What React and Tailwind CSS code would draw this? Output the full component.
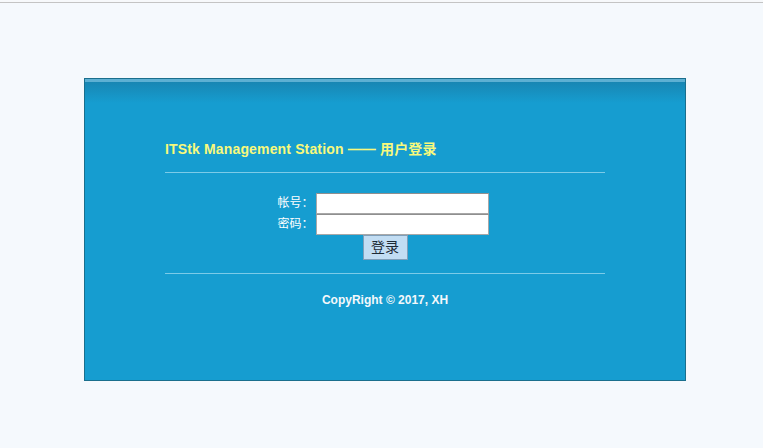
import React from 'react';

const cjk = "font-['Liberation_Sans','Noto_Sans_CJK_SC',sans-serif]";

const LoginRow = ({ label, type }) => (
  <div className="flex items-center">
    <span className="w-[36px] whitespace-nowrap text-right text-[12px] leading-[21px] text-white">{label}</span>
    <input
      type={type}
      className="ml-[2px] h-[21px] w-[173px] border border-[#a8a8a8] border-t-[#8f8f8f] bg-white px-1 text-[12px] outline-none"
    />
  </div>
);

const App = () => {
  return (
    <div className={`min-h-[448px] bg-[#f5f9fd] ${cjk}`}>
      <div className="h-[2px] bg-[#f7f9fb]"></div>
      <div className="h-px bg-[#c4c4c4]"></div>

      <div className="ml-[84px] mt-[75px] h-[303px] w-[602px] border border-[#1a6f8d] bg-[linear-gradient(to_bottom,#5db0d3_0px,#5db0d3_3px,#1886b3_3px,#169dd0_24px,#169dd0_100%)]">
        <div className="mx-auto w-[440px] pt-[62px]">
          <h1 className="text-[14px] font-bold leading-[17px] tracking-[0.15px] text-[#f8f97c]">
            ITStk Management Station —— 用户登录
          </h1>
          <div className="mt-[14px] h-px bg-[#7ccbe8]"></div>

          {/* login form */}
          <div className="mt-[20px] flex flex-col items-center">
            <div className="mr-[4px] flex flex-col">
              <LoginRow label="帐号：" type="text" />
              <LoginRow label="密码：" type="password" />
            </div>
            <button className="h-[25px] w-[45px] border border-[#7f9fba] bg-[#c2ddf3] text-[14px] leading-[23px] text-[#1d2a36]">
              登录
            </button>
          </div>

          <div className="mt-[13px] h-px bg-[#7ccbe8]"></div>
          <p className="mt-[19px] text-center text-[12px] font-bold leading-[14px] text-[#f4f8fb]">
            CopyRight © 2017, XH
          </p>
        </div>
      </div>
    </div>
  );
};

export default App;
